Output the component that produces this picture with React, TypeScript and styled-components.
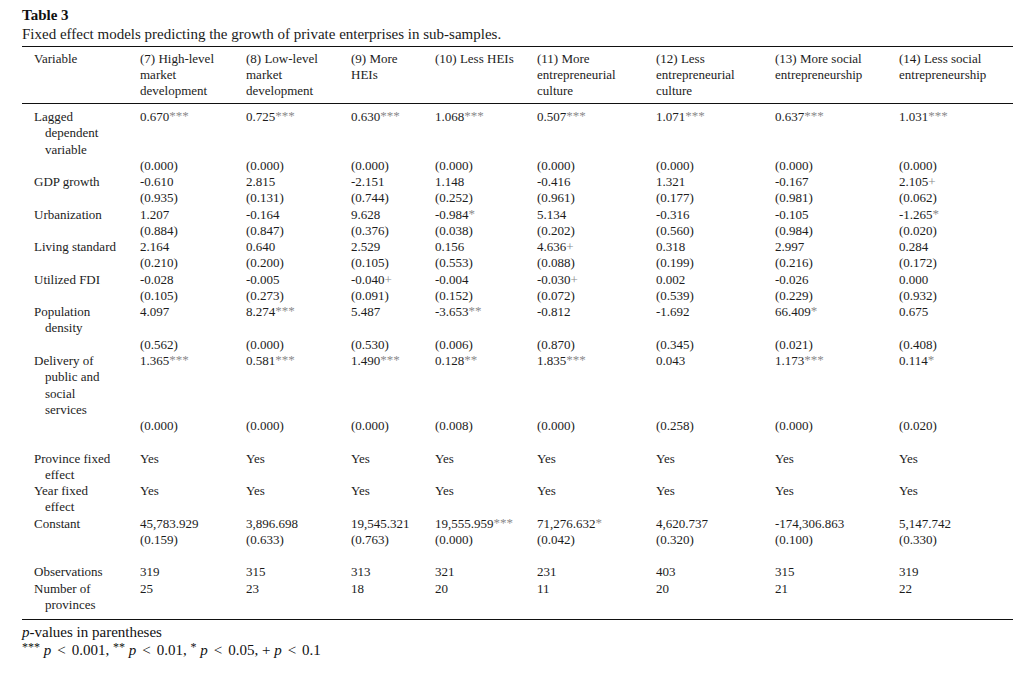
import styled, { createGlobalStyle } from "styled-components";

const GlobalStyle = createGlobalStyle`
  html, body {
    margin: 0;
    padding: 0;
    background: #fff;
  }
  body {
    font-family: "Liberation Serif", "Times New Roman", serif;
    color: #1c1c1c;
  }
`;

const Page = styled.main`
  width: 1032px;
  min-height: 683px;
  padding: 6px 19px 0 22px;
  box-sizing: border-box;
`;

const Title = styled.div`
  font-size: 15px;
  line-height: 18px;
  font-weight: 700;
  color: #111;
`;

const Caption = styled.div`
  font-size: 15px;
  line-height: 20px;
  color: #1a1a1a;
`;

const Table = styled.table`
  margin-top: 2px;
  width: 991px;
  table-layout: fixed;
  border-collapse: collapse;
  font-size: 13px;
  color: #1c1c1c;
`;

const HeadCell = styled.th<{ $first?: boolean }>`
  text-align: left;
  font-weight: 400;
  vertical-align: top;
  line-height: 16px;
  padding: 4px 0 4px ${(p) => (p.$first ? "12px" : "0")};
  border-top: 1px solid #111;
  border-bottom: 1px solid #111;
`;

const Row = styled.tr<{ $top?: boolean; $bottom?: boolean }>`
  & > td {
    padding-top: ${(p) => (p.$top ? "5px" : "0")};
    padding-bottom: ${(p) => (p.$bottom ? "6px" : "0")};
    border-bottom: ${(p) => (p.$bottom ? "1px solid #111" : "none")};
  }
`;

const Cell = styled.td`
  vertical-align: top;
  line-height: 16.27px;
  padding: 0;
  white-space: nowrap;
`;

const LabelCell = styled(Cell)`
  padding-left: 12px !important;
`;

const LabelLine = styled.span<{ $indent?: boolean }>`
  display: block;
  padding-left: ${(p) => (p.$indent ? "11px" : "0")};
`;

const Stars = styled.span`
  color: #8a8a8a;
  font-size: 1em;
  vertical-align: 0.08em;
  line-height: 0;
`;

const Plus = styled.span`
  color: #8a8a8a;
`;

const Notes = styled.div`
  margin-top: 3px;
  font-size: 15px;
  line-height: 18px;
  color: #111;
`;

const Ital = styled.i`
  font-style: italic;
`;

const Rel = styled.span`
  margin: 0 6px;
`;

const NoteStars = styled.span`
  font-size: 0.8em;
  vertical-align: 0.3em;
  line-height: 0;
`;

const colWidths = [118, 106, 105, 84, 102, 119, 119, 124, 114];

const headers: string[][] = [
  ["(7) High-level", "market", "development"],
  ["(8) Low-level", "market", "development"],
  ["(9) More", "HEIs"],
  ["(10) Less HEIs"],
  ["(11) More", "entrepreneurial", "culture"],
  ["(12) Less", "entrepreneurial", "culture"],
  ["(13) More social", "entrepreneurship"],
  ["(14) Less social", "entrepreneurship"],
];

type RowData = { label: string[]; values: string[] };

const rows: RowData[] = [
  {
    label: ["Lagged", "dependent", "variable"],
    values: ["0.670***", "0.725***", "0.630***", "1.068***", "0.507***", "1.071***", "0.637***", "1.031***"],
  },
  { label: [], values: Array(8).fill("(0.000)") },
  { label: ["GDP growth"], values: ["-0.610", "2.815", "-2.151", "1.148", "-0.416", "1.321", "-0.167", "2.105+"] },
  { label: [], values: ["(0.935)", "(0.131)", "(0.744)", "(0.252)", "(0.961)", "(0.177)", "(0.981)", "(0.062)"] },
  { label: ["Urbanization"], values: ["1.207", "-0.164", "9.628", "-0.984*", "5.134", "-0.316", "-0.105", "-1.265*"] },
  { label: [], values: ["(0.884)", "(0.847)", "(0.376)", "(0.038)", "(0.202)", "(0.560)", "(0.984)", "(0.020)"] },
  { label: ["Living standard"], values: ["2.164", "0.640", "2.529", "0.156", "4.636+", "0.318", "2.997", "0.284"] },
  { label: [], values: ["(0.210)", "(0.200)", "(0.105)", "(0.553)", "(0.088)", "(0.199)", "(0.216)", "(0.172)"] },
  { label: ["Utilized FDI"], values: ["-0.028", "-0.005", "-0.040+", "-0.004", "-0.030+", "0.002", "-0.026", "0.000"] },
  { label: [], values: ["(0.105)", "(0.273)", "(0.091)", "(0.152)", "(0.072)", "(0.539)", "(0.229)", "(0.932)"] },
  {
    label: ["Population", "density"],
    values: ["4.097", "8.274***", "5.487", "-3.653**", "-0.812", "-1.692", "66.409*", "0.675"],
  },
  { label: [], values: ["(0.562)", "(0.000)", "(0.530)", "(0.006)", "(0.870)", "(0.345)", "(0.021)", "(0.408)"] },
  {
    label: ["Delivery of", "public and", "social", "services"],
    values: ["1.365***", "0.581***", "1.490***", "0.128**", "1.835***", "0.043", "1.173***", "0.114*"],
  },
  { label: [], values: ["(0.000)", "(0.000)", "(0.000)", "(0.008)", "(0.000)", "(0.258)", "(0.000)", "(0.020)"] },
  { label: [], values: Array(8).fill("\u00a0") },
  { label: ["Province fixed", "effect"], values: Array(8).fill("Yes") },
  { label: ["Year fixed", "effect"], values: Array(8).fill("Yes") },
  {
    label: ["Constant"],
    values: ["45,783.929", "3,896.698", "19,545.321", "19,555.959***", "71,276.632*", "4,620.737", "-174,306.863", "5,147.742"],
  },
  { label: [], values: ["(0.159)", "(0.633)", "(0.763)", "(0.000)", "(0.042)", "(0.320)", "(0.100)", "(0.330)"] },
  { label: [], values: Array(8).fill("\u00a0") },
  { label: ["Observations"], values: ["319", "315", "313", "321", "231", "403", "315", "319"] },
  { label: ["Number of", "provinces"], values: ["25", "23", "18", "20", "11", "20", "21", "22"] },
];

function Value({ text }: { text: string }) {
  const m = text.match(/^(.*?)(\*+|\+)?$/);
  const base = m ? m[1] : text;
  const sig = m ? m[2] : undefined;
  return (
    <>
      {base}
      {sig === "+" ? <Plus>+</Plus> : sig ? <Stars>{sig}</Stars> : null}
    </>
  );
}

export default function App() {
  return (
    <Page>
      <GlobalStyle />
      <Title>Table 3</Title>
      <Caption>Fixed effect models predicting the growth of private enterprises in sub-samples.</Caption>
      <Table>
        <colgroup>
          {colWidths.map((w, i) => (
            <col key={i} style={{ width: w }} />
          ))}
        </colgroup>
        <thead>
          <tr>
            <HeadCell $first>Variable</HeadCell>
            {headers.map((h, i) => (
              <HeadCell key={i}>
                {h.map((line, j) => (
                  <LabelLine key={j}>{line}</LabelLine>
                ))}
              </HeadCell>
            ))}
          </tr>
        </thead>
        <tbody>
          {rows.map((r, i) => (
            <Row key={i} $top={i === 0} $bottom={i === rows.length - 1}>
              <LabelCell>
                {r.label.map((line, j) => (
                  <LabelLine key={j} $indent={j > 0}>
                    {line}
                  </LabelLine>
                ))}
              </LabelCell>
              {r.values.map((v, j) => (
                <Cell key={j}>
                  <Value text={v} />
                </Cell>
              ))}
            </Row>
          ))}
        </tbody>
      </Table>
      <Notes>
        <div>
          <Ital>p</Ital>-values in parentheses
        </div>
        <div>
          <NoteStars>***</NoteStars> <Ital>p</Ital>
          <Rel>&lt;</Rel>0.001, <NoteStars>**</NoteStars> <Ital>p</Ital>
          <Rel>&lt;</Rel>0.01, <NoteStars>*</NoteStars> <Ital>p</Ital>
          <Rel>&lt;</Rel>0.05, + <Ital>p</Ital>
          <Rel>&lt;</Rel>0.1
        </div>
      </Notes>
    </Page>
  );
}
